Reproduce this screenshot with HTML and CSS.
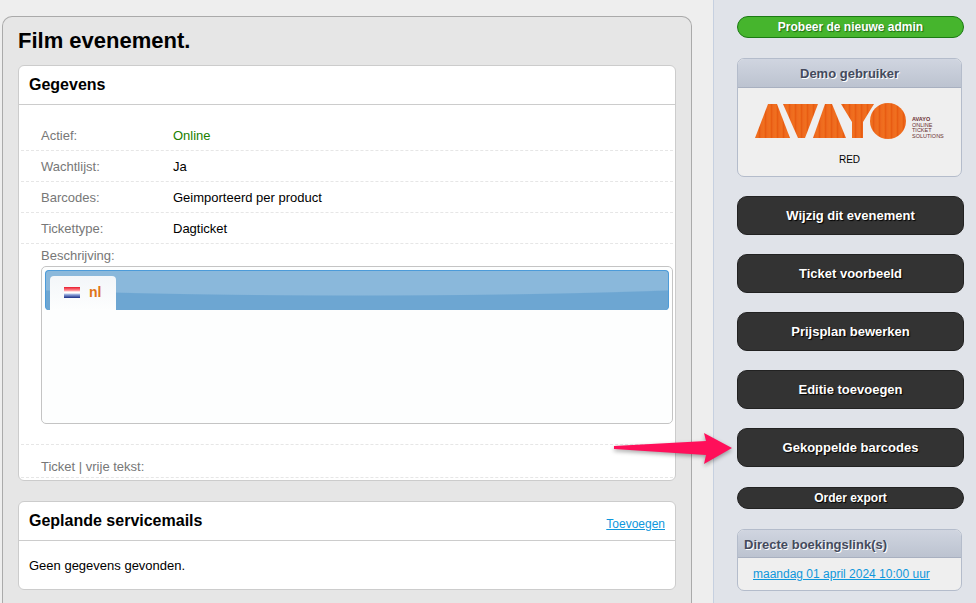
FILE: index.html
```html
<!DOCTYPE html>
<html lang="nl">
<head>
    <meta charset="UTF-8">
    <title>Film evenement</title>
    <link rel="stylesheet" href="styles.css">
</head>
<body>
    <div class="page">
        <div class="content">
            <div class="panel">
                <h1>Film evenement.</h1>

                <div class="card">
                    <div class="card-head"><h2>Gegevens</h2></div>
                    <div class="rows">
                        <div class="row"><span class="lbl">Actief:</span><span class="online">Online</span></div>
                        <div class="row"><span class="lbl">Wachtlijst:</span><span>Ja</span></div>
                        <div class="row"><span class="lbl">Barcodes:</span><span>Geimporteerd per product</span></div>
                        <div class="row"><span class="lbl">Tickettype:</span><span>Dagticket</span></div>
                        <div class="row-block">
                            <div class="lbl">Beschrijving:</div>
                            <div class="tabs-box">
                                <div class="tabs-bar">
                                    <div class="tab">
                                        <span class="flag"></span>
                                        <span class="tab-name">nl</span>
                                    </div>
                                </div>
                            </div>
                        </div>
                        <div class="row-last"><span class="lbl">Ticket | vrije tekst:</span></div>
                    </div>
                </div>

                <div class="card card-mails">
                    <div class="card-head">
                        <h2>Geplande servicemails</h2>
                        <a href="#" class="add">Toevoegen</a>
                    </div>
                    <p class="empty">Geen gegevens gevonden.</p>
                </div>
            </div>
        </div>

        <div class="side">
            <a href="#" class="btn btn-green">Probeer de nieuwe admin</a>

            <div class="box box-demo">
                <div class="box-head box-head-c">Demo gebruiker</div>
                <div class="logo">
                    <svg class="logo-mark" width="156" height="38" viewBox="0 0 156 38" role="img" aria-label="Avayo logo">
                        <defs>
                            <linearGradient id="stripes" x1="0" x2="6" y1="0" y2="0" gradientUnits="userSpaceOnUse" spreadMethod="repeat">
                                <stop offset="0" stop-color="#ee6a1f"/>
                                <stop offset=".5" stop-color="#f0701f"/>
                                <stop offset=".75" stop-color="#e85c12"/>
                                <stop offset="1" stop-color="#ee6a1f"/>
                            </linearGradient>
                        </defs>
                        <g fill="url(#stripes)">
                            <polygon points="0,36 13,2 22,2 35,36"/>
                            <polygon points="28,2 63,2 50,36 43,36"/>
                            <polygon points="58,36 70,2 77,2 91,36"/>
                            <polygon points="86,2 119,2 108,20 108,36 97,36 97,20"/>
                            <circle cx="133" cy="19" r="18"/>
                        </g>
                    </svg>
                    <div class="logo-txt"><b>AVAYO</b>ONLINE<br>TICKET<br>SOLUTIONS</div>
                </div>
                <div class="demo-name">RED</div>
            </div>

            <a href="#" class="btn btn-big">Wijzig dit evenement</a>
            <a href="#" class="btn btn-big">Ticket voorbeeld</a>
            <a href="#" class="btn btn-big">Prijsplan bewerken</a>
            <a href="#" class="btn btn-big">Editie toevoegen</a>
            <a href="#" class="btn btn-big">Gekoppelde barcodes</a>
            <a href="#" class="btn btn-small">Order export</a>

            <div class="box box-links">
                <div class="box-head">Directe boekingslink(s)</div>
                <div class="links"><a href="#">maandag 01 april 2024 10:00 uur</a></div>
            </div>
        </div>
    </div>

    <!-- pijl over de pagina heen -->
    <svg class="arrow" width="130" height="44" viewBox="0 0 130 44">
        <polygon points="4,18 96,13 94,5 122,20 94,36 96,27 4,21" fill="#ff0f5a"/>
    </svg>
</body>
</html>
```

FILE: styles.css
```css
html, body{
    height: 100%;
    margin: 0;
    overflow: hidden;
}
body{
    font-family: "Liberation Sans", Arial, sans-serif;
    font-size: 13px;
    color: #000;
    background: #eee;
}
.page{
    display: flex;
    height: 603px;
}

/* linker deel */
.content{
    width: 713px;
    flex: none;
    box-sizing: border-box;
    padding: 16px 21px 0 2px;
}
.panel{
    height: 587px;
    box-sizing: border-box;
    padding: 0 15px;
    background: #e6e6e6;
    border: 1px solid #aaa;
    border-bottom: 0;
    border-radius: 10px 10px 0 0;
}
h1{
    margin: 0;
    padding-top: 10px;
    height: 38px;
    font-size: 22px;
    line-height: 28px;
}
.card{
    background: #fff;
    border: 1px solid #ccc;
    border-radius: 6px;
    height: 414px;
    overflow: hidden;
}
.card-mails{
    height: 87px;
    margin-top: 20px;
}
.card-head{
    display: flex;
    justify-content: space-between;
    align-items: flex-end;
    height: 38px;
    padding: 0 10px;
    border-bottom: 1px solid #ccc;
}
h2{
    margin: 0;
    font-size: 16px;
    line-height: 38px;
}
.add{
    margin-bottom: 9px;
    color: #0e97dc;
    font-size: 12px;
}
.empty{
    margin: 0;
    padding: 17px 10px;
    line-height: 16px;
}

/* gegevens */
.rows{
    padding: 15px 2px 0 2px;
}
.row{
    display: flex;
    height: 29px;
    padding: 1px 0 0 20px;
    line-height: 30px;
    border-bottom: 1px dashed #e6e6e6;
}
.lbl{
    width: 132px;
    color: #777;
}
.online{
    color: #208000;
}
.row-block{
    height: 196px;
    padding: 4px 0 0 20px;
    border-bottom: 1px dashed #e6e6e6;
    line-height: 15px;
}
.row-block .lbl{
    width: auto;
}
.row-last{
    height: 32px;
    padding-left: 20px;
    line-height: 44px;
    border-bottom: 1px dashed #e6e6e6;
}
.row-last .lbl{
    width: auto;
}

/* taal tabs */
.tabs-box{
    height: 150px;
    margin-top: 3px;
    padding: 3px;
    border: 1px solid #c4c4c4;
    border-radius: 5px;
    background: #fdfefe;
}
.tabs-bar{
    display: flex;
    align-items: flex-end;
    height: 39px;
    padding-left: 4px;
    border: 1px solid #4c9bd9;
    border-bottom: 0;
    border-radius: 4px;
    background: radial-gradient(ellipse 520px 25px at 50% 0, #8ab8db 96%, #6da6d2 100%), #6da6d2;
}
.tab{
    display: flex;
    align-items: center;
    gap: 9px;
    box-sizing: border-box;
    width: 66px;
    height: 34px;
    padding: 0 0 2px 14px;
    border-radius: 4px 4px 0 0;
    background: linear-gradient(#f3f6f9, #fdfefe);
}
.flag{
    width: 16px;
    height: 11px;
    background: linear-gradient(#e8192c 0, #ff8a90 30%, #fff 45%, #fff 55%, #8aa0d8 70%, #1a2f86 100%);
}
.tab-name{
    color: #e0761a;
    font-size: 14px;
    font-weight: bold;
}

/* rechter kolom */
.side{
    flex: 1;
    box-sizing: border-box;
    padding: 16px 12px 0 23px;
    background: #e0e3e9;
    border-left: 1px solid #c6d0e0;
}
.btn{
    display: block;
    box-sizing: border-box;
    width: 227px;
    color: #fff;
    font-size: 12px;
    font-weight: bold;
    text-align: center;
    text-decoration: none;
    text-shadow: 1px 1px 1px #000;
}
.btn-green{
    height: 22px;
    line-height: 20px;
    background: #46b52d;
    border: 1px solid #1c7a14;
    border-radius: 11px;
    text-shadow: 1px 1px 1px #1c6a14;
}
.btn-big{
    height: 39px;
    margin-bottom: 19px;
    font-size: 13px;
    line-height: 38px;
    background: #333;
    border: 1px solid #222;
    border-radius: 10px;
}
.btn-small{
    height: 22px;
    margin: 20px 0;
    line-height: 20px;
    background: #333;
    border: 1px solid #222;
    border-radius: 11px;
}
.box{
    width: 225px;
    box-sizing: border-box;
    background: #efefef;
    border: 1px solid #b4bccb;
    border-radius: 7px;
    overflow: hidden;
}
.box-demo{
    height: 119px;
    margin: 20px 0 19px;
}
.box-links{
    height: 62px;
}
.box-head{
    height: 27px;
    padding-left: 6px;
    color: #444a5c;
    font-size: 13px;
    font-weight: bold;
    line-height: 29px;
    text-shadow: 1px 1px 0 #fff;
    background: linear-gradient(#d0d5e0, #bcc3d0);
    border-bottom: 1px solid #a8b0c0;
}
.box-head-c{
    height: 28px;
    padding-left: 0;
    line-height: 30px;
    text-align: center;
}
.logo{
    display: flex;
    align-items: flex-start;
    gap: 1px;
    height: 38px;
    margin: 14px 0 0 17px;
}
.logo-txt{
    margin-top: 15px;
    color: #6b3030;
    font-size: 5.5px;
    line-height: 5.7px;
}
.logo-txt b{
    display: block;
}
.demo-name{
    margin-top: 14px;
    font-size: 10px;
    text-align: center;
}
.links{
    padding: 8px 0 0 15px;
}
.links a{
    color: #0e97dc;
    font-size: 12px;
}

.arrow{
    position: absolute;
    left: 610px;
    top: 428px;
    filter: drop-shadow(0 2px 2px rgba(0,0,0,.35));
}
```
